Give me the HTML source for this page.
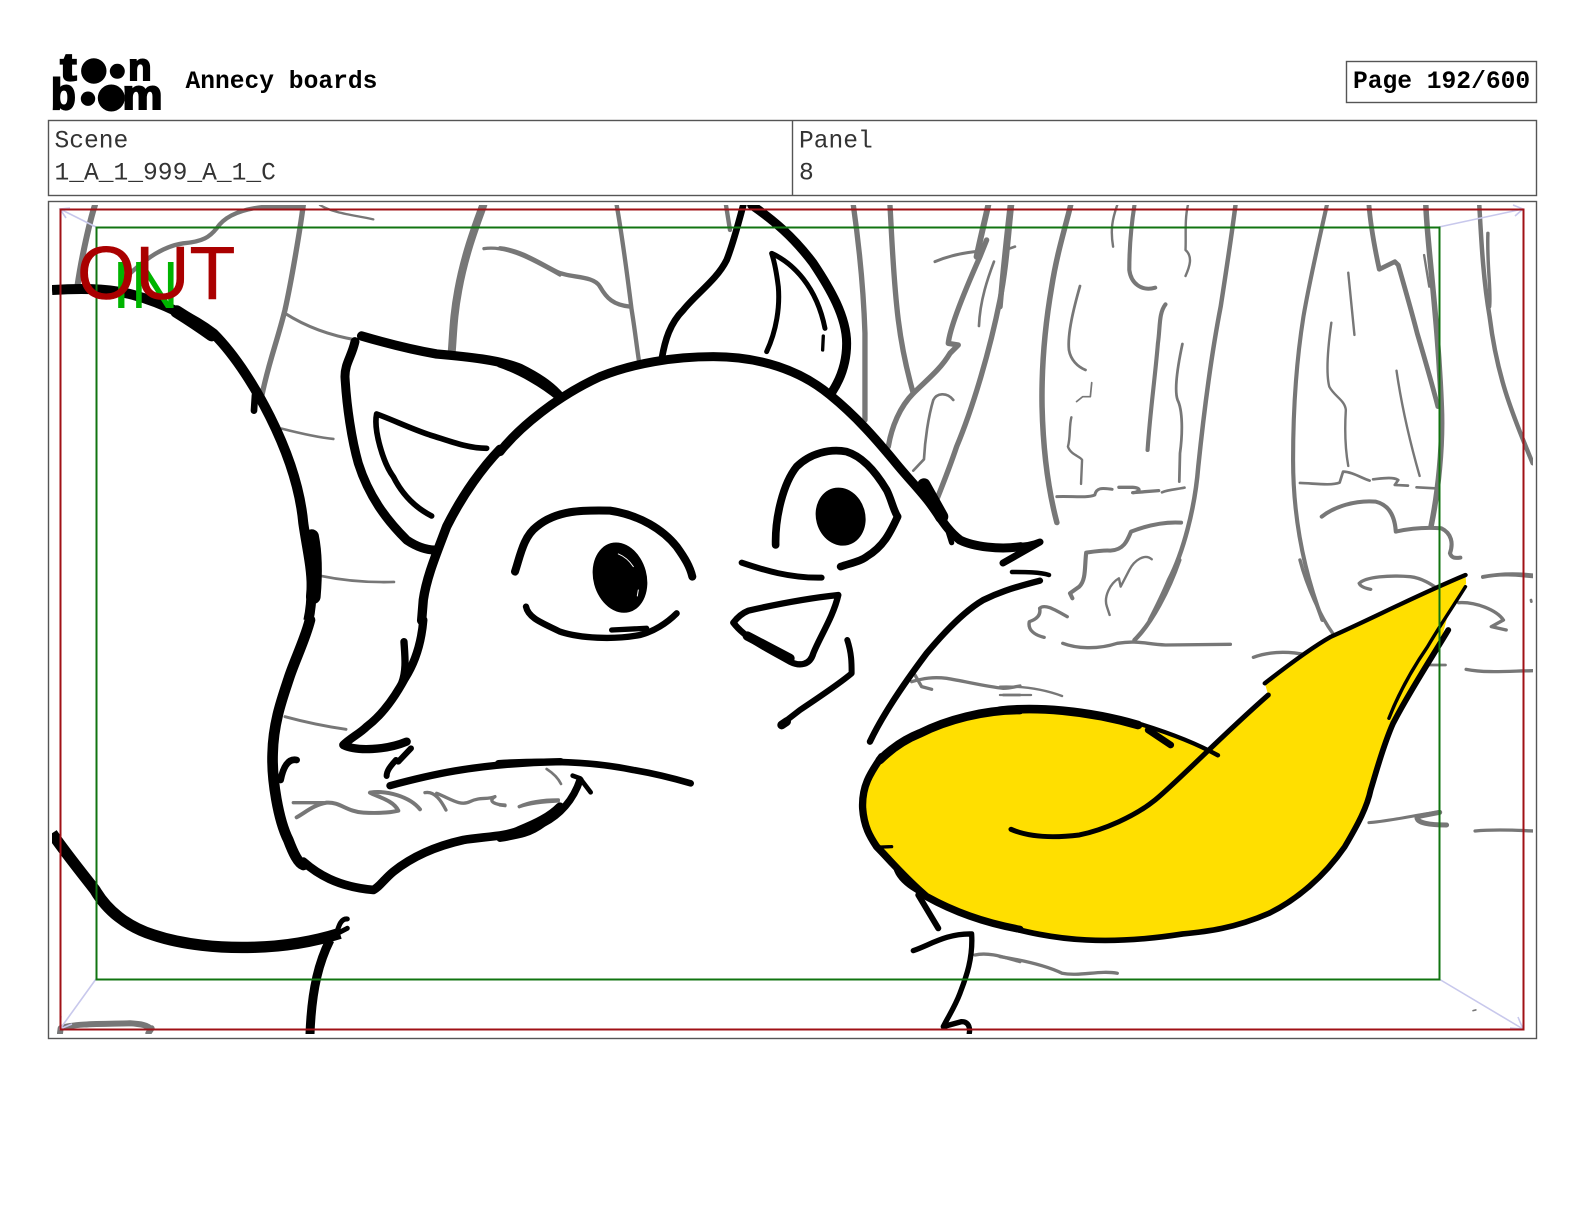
<!DOCTYPE html>
<html lang="en">
<head>
<meta charset="utf-8">
<title>Annecy boards</title>
<style>
html,body{margin:0;padding:0;background:#fff}
svg{display:block}
.m{font-family:"Liberation Mono",monospace;font-size:24.6px;fill:#333}
.b{font-weight:700;fill:#000}
.l{font-family:"Liberation Sans",sans-serif;font-weight:700;fill:#000;stroke:#000}
</style>
</head>
<body>
<svg width="1584" height="1224" viewBox="0 0 1584 1224">
<defs><clipPath id="c"><rect x="52" y="205" width="1481" height="829"/></clipPath></defs>
<rect width="1584" height="1224" fill="#fff"/>

<!-- logo -->
<g>
<text class="l" transform="translate(60.5 80) scale(1.25 1)" font-size="38" stroke-width="2.2">t</text>
<circle cx="93.8" cy="71" r="12.7"/>
<circle cx="117.3" cy="71.3" r="7.5"/>
<text class="l" x="128.3" y="80" font-size="38" stroke-width="2">n</text>
<text class="l" transform="translate(51 109) scale(.92 1)" font-size="44" stroke-width="2">b</text>
<circle cx="88" cy="98.7" r="7.2"/>
<circle cx="111.3" cy="98" r="13.5"/>
<text class="l" transform="translate(122.5 109) scale(1.07 1)" font-size="42" stroke-width="2">m</text>
</g>

<text class="m b" x="185.5" y="88">Annecy boards</text>
<rect x="1346.5" y="61.5" width="190" height="41" fill="none" stroke="#555" stroke-width="1.4"/>
<text class="m b" x="1353" y="88">Page 192/600</text>

<rect x="48.5" y="120.5" width="1488" height="75" fill="none" stroke="#555" stroke-width="1.4"/>
<line x1="792.5" y1="120.5" x2="792.5" y2="195.5" stroke="#555" stroke-width="1.4"/>
<text class="m" x="54.5" y="147.5">Scene</text>
<text class="m" x="54.5" y="179.5">1_A_1_999_A_1_C</text>
<text class="m" x="799" y="147.5">Panel</text>
<text class="m" x="799" y="179.5">8</text>
<rect x="48.5" y="201.5" width="1488" height="837" fill="none" stroke="#555" stroke-width="1.4"/>

<g clip-path="url(#c)" fill="none" stroke-linecap="round" stroke-linejoin="round">

<!-- GREY BACKGROUND -->
<g stroke="#777">
<g transform="translate(40 200) scale(.3333)">
<path stroke-width="18" d="M165,15C150,60 125,170 112,260"/>
<path stroke-width="13" d="M250,240C300,190 360,140 430,130C490,125 510,110 530,85C560,40 620,25 680,20L790,20"/>
<path stroke-width="16" d="M790,15C780,90 755,240 735,330C710,430 685,490 665,590"/>
<path stroke-width="7" d="M840,15C880,40 940,45 1000,58"/>
<path stroke-width="9" d="M735,340C790,375 860,405 950,420"/>
<path stroke-width="24" d="M1330,15C1310,70 1275,160 1255,270C1240,350 1240,400 1235,460"/>
<path stroke-width="10" d="M1332,146C1400,135 1480,180 1560,225"/>
<path stroke-width="8" d="M725,686C780,700 830,712 880,717"/>
<path stroke-width="8" d="M843,1128C910,1142 990,1148 1062,1146"/>
</g>
<g transform="translate(40 620) scale(.3333)">
<path stroke-width="9" d="M735,290C790,305 850,318 918,328"/>
<path stroke-width="10" d="M760,548L850,548"/>
<path stroke-width="12" d="M770,592C800,575 820,555 860,548C900,545 920,575 970,578C1010,580 1050,578 1075,572C1060,540 1010,530 990,518C1040,510 1110,530 1140,568"/>
<path stroke-width="10" d="M1155,518C1185,512 1205,545 1218,570M1190,520C1230,535 1260,560 1290,545C1320,530 1340,540 1365,530C1340,545 1370,555 1395,555"/>
<path stroke-width="10" d="M1438,560C1470,550 1510,545 1555,543"/>
<path stroke-width="18" d="M62,1225C100,1210 200,1212 270,1210C300,1212 325,1215 332,1228M60,1240L62,1225M325,1240L335,1225"/>
</g>
<g transform="translate(500 200) scale(.3333)">
<path stroke-width="13" d="M350,15C365,100 385,250 395,330C405,390 410,440 418,490"/>
<path stroke-width="13" d="M0,145C60,150 120,190 170,215C210,235 280,225 300,260C320,295 340,315 390,320"/>
<path stroke-width="13" d="M678,15L690,90"/>
<path stroke-width="16" d="M1060,15C1075,120 1090,250 1095,400L1095,660"/>
<path stroke-width="16" d="M1170,15C1175,100 1180,240 1195,360C1205,440 1220,510 1240,580"/>
<path stroke-width="16" d="M1165,740C1175,680 1200,620 1240,580C1280,540 1320,510 1350,460L1375,435L1345,430C1350,380 1400,260 1440,170L1460,120"/>
<path stroke-width="18" d="M1465,15C1455,60 1440,120 1430,170"/>
<path stroke-width="9" d="M1305,185C1340,170 1380,160 1425,155"/>
<path stroke-width="8" d="M1482,185C1465,230 1440,300 1437,378"/>
<path stroke-width="16" d="M1535,15C1525,100 1520,200 1500,300C1470,450 1420,620 1370,740C1350,800 1330,850 1310,900"/>
<path stroke-width="8" d="M1530,145L1545,140"/>
<path stroke-width="8" d="M1360,600C1340,575 1310,580 1300,600C1285,650 1275,720 1272,778L1240,812"/>
</g>
<g transform="translate(500 560) scale(.3333)">
<path stroke-width="8" d="M140,627C160,640 175,655 183,672"/>
<path stroke-width="10" d="M58,740C90,725 130,720 175,720M0,735L15,737"/>
<path stroke-width="10" d="M1235,365C1270,355 1300,350 1340,355C1400,365 1460,380 1510,385C1530,385 1545,380 1560,378"/>
<path stroke-width="10" d="M1245,345L1265,380L1295,388"/>
<path stroke-width="8" d="M1510,405L1560,405"/>
<path stroke-width="10" d="M1425,1185C1470,1175 1520,1195 1560,1205"/>
</g>
<g transform="translate(1000 200) scale(.3448 .3333)">
<path stroke-width="16" d="M30,15C25,60 10,200 0,320"/>
<path stroke-width="16" d="M205,15C190,80 165,160 150,260C130,380 120,500 122,620C125,750 140,870 165,968"/>
<path stroke-width="7" d="M340,15C325,60 320,90 328,140"/>
<path stroke-width="12" d="M390,15C380,80 375,150 375,210C380,250 410,275 450,263"/>
<path stroke-width="7" d="M545,15C535,60 540,110 538,150C560,170 550,200 538,228"/>
<path stroke-width="8" d="M232,258C215,320 195,400 200,450C205,480 225,500 248,510"/>
<path stroke-width="5" d="M266,548L262,590L240,590L222,605"/>
<path stroke-width="7" d="M207,652C200,680 205,710 197,740C205,765 235,770 238,780L235,852"/>
<path stroke-width="12" d="M480,313C460,340 465,380 458,430C450,530 435,640 428,750"/>
<path stroke-width="8" d="M529,432C515,500 505,570 515,600C530,630 530,700 522,760L520,845"/>
<path stroke-width="13" d="M683,15C670,120 655,220 640,320C610,480 590,650 575,800C565,930 530,1060 490,1140C470,1190 450,1230 435,1260"/>
<path stroke-width="9" d="M165,890C210,888 250,895 275,885C280,860 300,865 325,868"/>
<path stroke-width="10" d="M345,862L385,862C420,865 395,880 385,878L460,872"/>
<path stroke-width="8" d="M470,877C490,868 515,868 535,863"/>
<path stroke-width="12" d="M525,968C480,965 430,975 380,995C370,1020 360,1050 320,1052C300,1050 270,1055 250,1058C245,1100 250,1140 230,1160L203,1180L210,1195"/>
<path stroke-width="7" d="M440,1078C420,1060 390,1080 375,1110L350,1160L345,1135C320,1150 300,1190 310,1220L318,1245"/>
<path stroke-width="12" d="M948,15C930,100 900,230 880,350C860,480 850,620 850,780C850,950 880,1110 935,1260"/>
<path stroke-width="14" d="M1070,15C1075,80 1090,160 1100,208L1145,185L1155,195C1170,250 1190,320 1210,400C1230,470 1250,540 1270,620"/>
<path stroke-width="16" d="M1235,15C1240,150 1270,350 1280,620C1285,740 1270,880 1250,980"/>
<path stroke-width="7" d="M1230,165L1245,260"/>
<path stroke-width="7" d="M1010,218L1028,405"/>
<path stroke-width="7" d="M961,368C950,450 945,520 955,560C970,590 1000,600 1003,630C1000,680 1000,740 1010,798"/>
<path stroke-width="7" d="M1150,512C1165,620 1190,730 1217,828"/>
<path stroke-width="8" d="M870,849C910,850 960,858 985,848L995,815C1020,815 1050,835 1072,842M1082,838C1110,835 1140,830 1155,840L1145,855L1183,857M1208,862L1262,865"/>
<path stroke-width="12" d="M933,950C970,920 1030,900 1090,905C1130,915 1145,950 1148,995C1190,985 1240,982 1280,985C1310,1000 1315,1030 1305,1060C1310,1075 1320,1075 1335,1073"/>
<path stroke-width="13" d="M1390,15C1395,100 1400,230 1420,350C1440,520 1480,630 1545,790"/>
<path stroke-width="10" d="M1415,100C1412,200 1425,270 1420,320"/>
<path stroke-width="10" d="M1400,1132C1450,1120 1500,1125 1545,1130"/>
</g>
<g transform="translate(1000 560) scale(.3448 .3333)">
<path stroke-width="13" d="M520,0C490,90 440,190 390,240"/>
<path stroke-width="10" d="M870,0C890,80 930,170 965,220"/>
<path stroke-width="10" d="M195,170C160,150 130,130 115,145C120,170 100,180 85,185C80,210 100,225 128,232"/>
<path stroke-width="10" d="M182,250C220,265 280,270 340,250C400,240 420,252 480,255L668,253"/>
<path stroke-width="10" d="M1042,70C1060,50 1130,45 1190,50C1230,55 1260,80 1275,90M1042,70C1045,80 1060,85 1075,88"/>
<path stroke-width="10" d="M1400,50C1450,40 1500,40 1545,45"/>
<path stroke-width="10" d="M1330,128C1380,125 1440,150 1460,180L1425,200L1468,210"/>
<path stroke-width="10" d="M1352,328C1410,340 1480,333 1545,332"/>
<path stroke-width="8" d="M1240,315L1292,315"/>
<path stroke-width="10" d="M735,292C780,275 830,272 890,285"/>
<path stroke-width="9" d="M1070,788C1120,785 1180,770 1275,755"/>
<path stroke-width="15" d="M1275,757L1210,770C1205,790 1250,795 1295,795"/>
<path stroke-width="10" d="M1378,813C1430,808 1490,810 1545,813"/>
<path stroke-width="8" d="M1540,120L1541,125"/>
<path stroke-width="5" d="M1372,1352L1380,1350"/>
<path stroke-width="10" d="M0,1190C60,1200 130,1215 180,1240C230,1250 290,1230 340,1240"/>
<path stroke-width="7" d="M0,380C60,378 120,385 180,408M0,405L90,405"/>
</g>
</g>

<!-- YELLOW -->
<g fill="#ffdf00" stroke="none">
<path transform="translate(500 560) scale(.3333)" d="M1570,450C1450,450 1340,480 1260,520C1210,540 1170,570 1140,600C1110,640 1085,680 1088,745C1092,800 1110,830 1130,860C1170,900 1210,950 1280,1010C1370,1060 1460,1090 1570,1108Z"/>
<path transform="translate(1000 560) scale(.3448 .3333)" d="M-10,452C100,440 250,450 400,495C480,515 560,545 605,570L778,405L768,370C830,320 900,265 960,230C1080,175 1200,110 1350,45L1352,70L1300,160L1280,240C1240,310 1190,390 1140,490C1110,560 1090,640 1075,690C1065,740 1040,790 1000,860C940,950 860,1020 780,1060C680,1105 600,1115 530,1122C450,1135 350,1145 250,1140C150,1135 70,1115 -10,1095Z"/>
</g>

<!-- BLACK -->
<g stroke="#000">
<g transform="translate(40 200) scale(.3333)">
<path stroke-width="30" stroke-linecap="butt" d="M36,270C100,266 200,262 280,285C370,310 460,355 520,400C590,470 650,570 690,650C740,750 780,860 790,970C800,1040 815,1100 815,1160C815,1210 810,1240 805,1262"/>
<path stroke-width="44" d="M815,1010C825,1060 826,1120 820,1190"/>
<path stroke-width="38" d="M410,335C450,360 480,380 515,405"/>
<path stroke-width="20" d="M642,632L645,585"/>
<path stroke-width="28" d="M965,408C1040,430 1120,450 1190,462C1280,470 1380,480 1440,505C1490,530 1530,555 1560,590"/>
<path stroke-width="27" d="M945,425C935,470 915,490 915,530C920,620 935,720 955,790C990,900 1050,970 1100,1020C1130,1040 1160,1050 1185,1050"/>
<path stroke-width="17" d="M1340,745C1280,745 1220,720 1170,705C1110,685 1060,660 1010,642C1000,690 1030,790 1060,830C1090,890 1130,925 1175,948"/>
<path stroke-width="28" d="M1380,748C1330,800 1270,880 1220,980C1190,1060 1160,1130 1150,1200L1145,1262"/>
</g>
<g transform="translate(40 620) scale(.3333)">
<path stroke-width="32" d="M810,0C795,60 760,130 745,180C725,240 700,310 698,400C695,480 715,600 745,660C760,700 775,730 790,735"/>
<path stroke-width="26" d="M790,725C830,760 890,800 1000,810C1020,800 1030,780 1060,755C1110,715 1180,680 1270,660C1330,650 1400,650 1440,630C1490,610 1530,590 1560,560"/>
<path stroke-width="25" d="M1150,0C1145,60 1130,120 1095,175C1060,240 1020,290 980,320C960,340 930,355 910,375C950,395 1040,390 1100,365"/>
<path stroke-width="22" d="M1092,65C1095,110 1100,150 1085,190"/>
<path stroke-width="18" d="M1113,385L1075,425M1068,420C1055,435 1040,450 1040,468"/>
<path stroke-width="22" d="M1050,497C1150,470 1300,430 1562,425"/>
<path stroke-width="20" d="M770,420C745,415 730,440 722,480"/>
<path stroke-width="34" stroke-linecap="butt" d="M36,640C70,690 110,740 165,810C200,870 260,920 340,945C430,975 540,985 640,982C730,980 820,965 900,940"/>
<path stroke-width="15" d="M922,897C900,895 895,925 888,945M922,925L893,940"/>
<path stroke-width="27" stroke-linecap="butt" d="M870,960C840,1020 815,1100 810,1245"/>
</g>
<g transform="translate(500 200) scale(.3333)">
<path stroke-width="20" d="M730,15C715,70 700,130 680,180C650,240 590,280 550,330C510,370 495,420 485,478"/>
<path stroke-width="27" d="M755,15C820,60 880,110 940,190C990,265 1040,350 1040,430C1040,490 1020,540 995,578"/>
<path stroke-width="15" d="M800,455C830,390 840,320 835,260C830,220 825,190 815,160C880,190 950,260 975,385"/>
<path stroke-width="10" d="M970,408L968,450"/>
<path stroke-width="27" d="M0,755C60,680 170,590 300,530C400,490 520,470 640,470C780,470 900,510 990,585C1070,650 1130,720 1180,780C1220,830 1260,870 1290,910C1320,950 1340,990 1380,1020C1420,1040 1500,1050 1562,1040"/>
<path stroke-width="40" d="M1272,855L1325,950"/>
<path stroke-width="16" d="M1340,980L1355,1028"/>
<path stroke-width="26" d="M0,490C60,510 130,550 180,592"/>
<path stroke-width="24" d="M45,1115C60,1070 70,1010 110,980C170,930 250,930 330,932C420,945 490,990 530,1040C555,1075 570,1100 577,1130"/>
<ellipse cx="360" cy="1133" rx="80" ry="107" transform="rotate(-15 360 1133)" fill="#000" stroke="none"/>
<path stroke="#fff" stroke-width="3" d="M355,1062C375,1070 390,1085 400,1100M415,1170L412,1188"/>
<path stroke-width="23" d="M827,1035C825,950 850,850 890,800C930,760 990,745 1040,755C1090,770 1130,820 1160,870C1175,900 1180,930 1193,950C1170,1000 1150,1040 1100,1070C1080,1085 1050,1090 1022,1100"/>
<ellipse cx="1022" cy="950" rx="74" ry="88" transform="rotate(-15 1022 950)" fill="#000" stroke="none"/>
<path stroke-width="18" d="M725,1088C790,1110 870,1135 965,1133"/>
</g>
<g transform="translate(500 560) scale(.3333)">
<path stroke-width="19" d="M78,140C85,175 130,190 180,215C240,235 340,240 420,225C460,215 500,190 530,160"/>
<path stroke-width="16" d="M335,210L440,205"/>
<path stroke-width="19" d="M1015,105C920,115 820,135 745,152C725,160 710,175 700,188C740,240 810,270 870,305C900,320 930,315 940,280C960,230 1000,170 1015,105Z"/>
<path stroke-width="28" d="M742,228L870,295"/>
<path stroke-width="18" d="M1042,240C1055,280 1055,310 1055,340C1020,370 960,410 900,450L855,485"/>
<path stroke-width="26" d="M845,495L860,485"/>
<path stroke-width="20" d="M-5,610C150,600 280,605 400,630C460,640 520,655 572,670"/>
<path stroke-width="22" d="M0,835C60,825 90,820 130,790C180,765 220,720 240,660"/>
<path stroke-width="14" d="M218,647L240,655L272,697"/>
<path stroke-width="19" d="M1110,545C1150,460 1220,360 1280,280C1330,220 1390,155 1450,120C1490,100 1530,85 1620,62"/>
<path stroke-width="26" d="M1560,450C1450,450 1340,480 1260,520C1210,540 1170,570 1140,600"/>
<path stroke-width="22" d="M1145,590C1110,640 1085,680 1088,745C1092,800 1110,830 1130,860C1170,900 1210,950 1280,1010C1370,1060 1460,1090 1560,1108"/>
<path stroke-width="10" d="M1125,862L1175,860M1185,925C1195,960 1230,985 1270,1005"/>
<path stroke-width="18" d="M1255,1005L1315,1105"/>
<path stroke-width="16" d="M1240,1172C1290,1155 1340,1120 1415,1122C1420,1200 1395,1260 1380,1300C1365,1340 1345,1370 1330,1400L1385,1385C1410,1385 1410,1410 1408,1420"/>
</g>
<path stroke-width="7" d="M1015,546.5C1025,546.5 1033,545 1040,542L1003,563"/>
<path stroke-width="4.5" d="M1012,572C1025,572 1040,572 1049,575"/>
<g transform="translate(1000 560) scale(.3448 .3333)">
<path stroke-width="26" d="M0,452C100,440 250,450 400,495"/>
<path stroke-width="13" d="M400,490C480,515 560,545 632,586"/>
<path stroke-width="20" d="M430,510L495,555"/>
<path stroke-width="15" d="M32,808C80,830 150,835 230,825C300,810 390,770 450,720C520,660 640,530 778,405"/>
<path stroke-width="13" d="M768,370C830,320 900,265 960,230C1080,175 1200,110 1350,45"/>
<path stroke-width="17" d="M1300,210C1260,280 1190,390 1140,490C1110,560 1090,640 1075,690C1065,740 1040,790 1000,860C940,950 860,1020 780,1060C680,1105 600,1115 530,1122C450,1135 350,1145 250,1140C150,1135 70,1115 0,1095"/>
<path stroke-width="10" d="M1350,80C1320,130 1280,190 1240,260C1200,320 1160,390 1128,475"/>
</g>
</g>
</g>

<!-- GUIDES -->
<g fill="none" stroke="#c8c8ec" stroke-width="1.6">
<path d="M96,227L60,209M70,208L60,209L66,218"/>
<path d="M1439,227L1523,209M1513,205L1523,209L1515,216"/>
<path d="M96,979L60,1029M61,1016L60,1029L72,1024"/>
<path d="M1439,979L1523,1029M1518,1017L1523,1029L1510,1028"/>
</g>
<rect x="60.5" y="209.5" width="1463" height="820" fill="none" stroke="#a01016" stroke-width="2"/>
<rect x="96.5" y="227.5" width="1343" height="752" fill="none" stroke="#117411" stroke-width="2"/>

<text x="112" y="308" font-family="'Liberation Sans',sans-serif" font-size="67" fill="#00b400">IN</text>
<text x="77" y="299" font-family="'Liberation Sans',sans-serif" font-size="75" fill="#aa0000" stroke="#aa0000" stroke-width=".6">OUT</text>
</svg>
</body>
</html>
